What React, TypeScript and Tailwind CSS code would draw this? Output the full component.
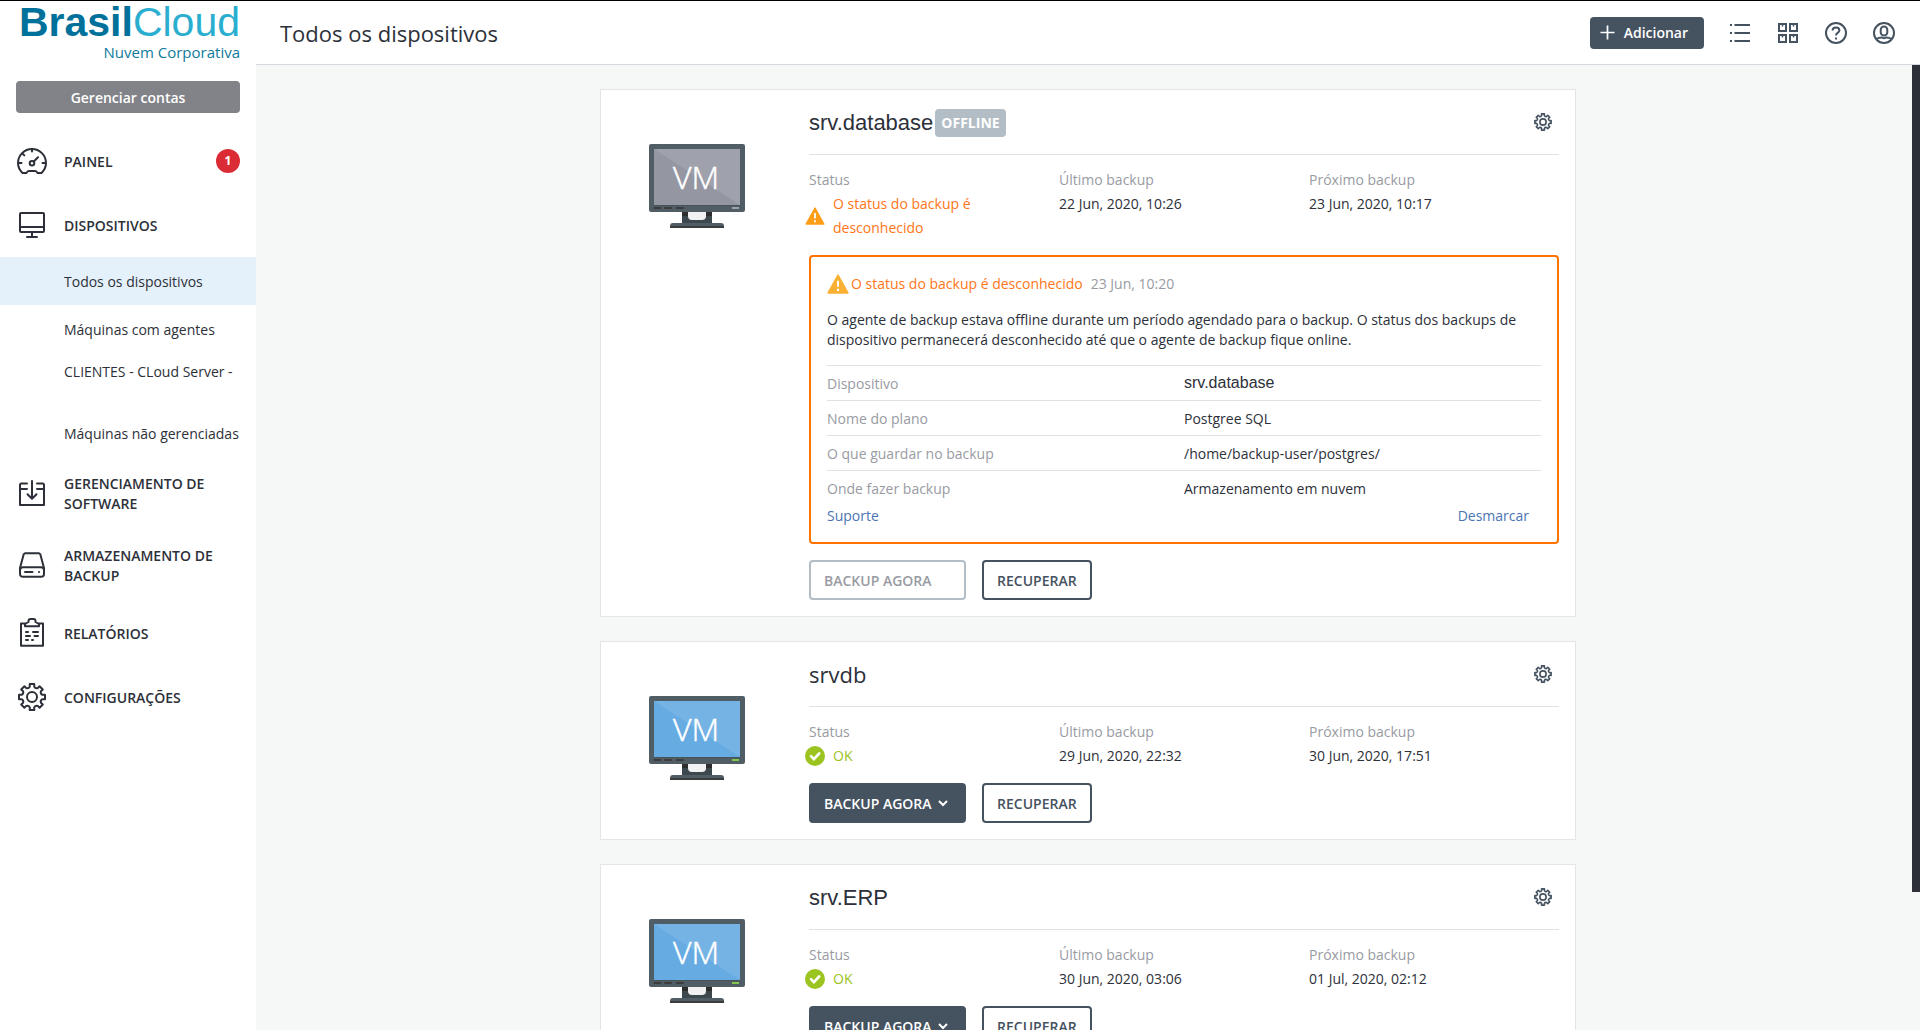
import type { ReactNode } from "react";

type Tone = "online" | "offline";

interface Alert {
    title: string;
    date: string;
    message: string;
    details: { label: string; value: string; plain?: boolean }[];
}

interface Device {
    id: number;
    name: string;
    plainName?: boolean;
    tone: Tone;
    status: string;
    lastBackup: string;
    nextBackup: string;
    alert?: Alert;
}

const DEVICES: Device[] = [
    {
        id: 1,
        name: "srv.database",
        plainName: true,
        tone: "offline",
        status: "O status do backup é desconhecido",
        lastBackup: "22 Jun, 2020, 10:26",
        nextBackup: "23 Jun, 2020, 10:17",
        alert: {
            title: "O status do backup é desconhecido",
            date: "23 Jun, 10:20",
            message:
                "O agente de backup estava offline durante um período agendado para o backup. O status dos backups de dispositivo permanecerá desconhecido até que o agente de backup fique online.",
            details: [
                { label: "Dispositivo", value: "srv.database", plain: true },
                { label: "Nome do plano", value: "Postgree SQL" },
                { label: "O que guardar no backup", value: "/home/backup-user/postgres/" },
                { label: "Onde fazer backup", value: "Armazenamento em nuvem" },
            ],
        },
    },
    {
        id: 2,
        name: "srvdb",
        tone: "online",
        status: "OK",
        lastBackup: "29 Jun, 2020, 22:32",
        nextBackup: "30 Jun, 2020, 17:51",
    },
    {
        id: 3,
        name: "srv.ERP",
        plainName: true,
        tone: "online",
        status: "OK",
        lastBackup: "30 Jun, 2020, 03:06",
        nextBackup: "01 Jul, 2020, 02:12",
    },
];

const PLAIN_FONT = "font-['Liberation_Sans',Arial,sans-serif]";

// Eight-toothed gear centred in a 32x32 box
function gearPath() {
    const at = (r: number, deg: number) => {
        const a = (deg * Math.PI) / 180;
        return `${(16 + r * Math.cos(a)).toFixed(2)} ${(16 + r * Math.sin(a)).toFixed(2)}`;
    };
    let d = "";
    for (let i = 0; i < 8; i++) {
        const a = i * 45;
        d += `${i === 0 ? "M" : "L"}${at(10.6, a - 12)}L${at(13.2, a - 10)}L${at(13.2, a + 10)}L${at(10.6, a + 12)}`;
        d += `Q${at(8.8, a + 22.5)} ${at(10.6, a + 33)}`;
    }
    return d + "Z";
}

const GEAR = gearPath();

function GearIcon({ className, strokeWidth = 2 }: { className?: string; strokeWidth?: number }) {
    return (
        <svg viewBox="0 0 32 32" fill="none" stroke="currentColor" strokeWidth={strokeWidth} strokeLinejoin="round" className={className} aria-hidden="true">
            <path d={GEAR} />
            <circle cx="16" cy="16" r="5" />
        </svg>
    );
}

function NavIcon({ children }: { children: ReactNode }) {
    return (
        <svg viewBox="0 0 32 32" fill="none" stroke="currentColor" strokeWidth="2" strokeLinecap="round" strokeLinejoin="round" className="size-8 shrink-0" aria-hidden="true">
            {children}
        </svg>
    );
}

function NavItem({ icon, label, badge }: { icon: ReactNode; label: string; badge?: number }) {
    return (
        <a href="#" className="flex min-h-16 items-center gap-4 px-4 py-[15px] font-semibold uppercase">
            {icon}
            <span className="flex-1 pt-0.5">{label}</span>
            {badge && (
                <span className="flex size-6 items-center justify-center rounded-full bg-[#db2c36] text-xs font-bold text-white">{badge}</span>
            )}
        </a>
    );
}

function Sidebar() {
    const subItem = "flex h-12 items-center pt-0.5 pl-16";
    return (
        <aside className="w-64 shrink-0 bg-white">
            <a href="#" className="flex h-20 flex-col items-end px-4">
                <span className={`${PLAIN_FONT} text-[41px] leading-[42px] whitespace-nowrap text-[#2aaed0]`}>
                    <strong className="text-[#00719a]">Brasil</strong>Cloud
                </span>
                <span className="text-[15px] leading-[18px] text-[#0f7a9c]">Nuvem Corporativa</span>
            </a>
            <div className="px-4 pb-4">
                <button type="button" className="h-8 w-full rounded bg-[#828388] pt-0.5 font-semibold text-white">
                    Gerenciar contas
                </button>
            </div>
            <nav>
                <NavItem
                    label="Painel"
                    badge={1}
                    icon={
                        <NavIcon>
                            <path d="M6.500 28C3 24.500 2 21 2 18A14 14 0 0 1 30 18C30 21 29 24.500 25.500 28H21.500C21 26.600 20.200 26 19 26H13C11.800 26 11 26.600 10.500 28Z" />
                            <path d="M16 4v2.500M3 18h2.500M26.500 18H29M6.600 8.700l1.700 1.700" />
                            <circle cx="16" cy="18.300" r="2.300" />
                            <path d="M17.800 16.500L22 12.300" />
                        </NavIcon>
                    }
                />
                <NavItem
                    label="Dispositivos"
                    icon={
                        <NavIcon>
                            <rect x="4" y="4" width="24" height="19" rx="1" />
                            <path d="M4 18h24M16 23v5M11 28h10" />
                        </NavIcon>
                    }
                />
                <ul>
                    <li>
                        <a href="#" aria-current="page" className={`${subItem} bg-[#e4f1fa]`}>Todos os dispositivos</a>
                    </li>
                    <li>
                        <a href="#" className={subItem}>Máquinas com agentes</a>
                    </li>
                    <li className="pb-2">
                        <a href="#" className="flex h-12 items-start pt-[9px] pl-16">CLIENTES - CLoud Server -</a>
                    </li>
                    <li>
                        <a href="#" className={subItem}>Máquinas não gerenciadas</a>
                    </li>
                </ul>
                <NavItem
                    label="Gerenciamento de software"
                    icon={
                        <NavIcon>
                            <path d="M11 6.500H5L4 7.500V28H28V7.500L27 6.500H21M4 12h7M21 12h7M16 4v17.500M11.500 17.200l4.500 4.500 4.500-4.500" />
                        </NavIcon>
                    }
                />
                <NavItem
                    label="Armazenamento de backup"
                    icon={
                        <NavIcon>
                            <path d="M9 4.200H23L24.300 5.200L28 19V25A2.800 2.800 0 0 1 25.200 27.800H6.800A2.800 2.800 0 0 1 4 25V19L7.700 5.200Z" />
                            <path d="M4 21A3 3 0 0 1 7 18.200H25A3 3 0 0 1 28 21M9 23h7.500M23 23h.1" />
                        </NavIcon>
                    }
                />
                <NavItem
                    label="Relatórios"
                    icon={
                        <NavIcon>
                            <path d="M9 6.500H5V28.700H27V6.500H23" />
                            <path d="M9 9.200V7L12.500 5V4C12.500 2.600 13 2 14.500 2H17.500C19 2 19.500 2.600 19.500 4V5L23 7V9.200Z" />
                            <path d="M10 15h2M17 15h5M10 19h4M18.500 19h3.500M10 23h2M16 23h1" />
                        </NavIcon>
                    }
                />
                <NavItem label="Configurações" icon={<GearIcon className="size-8 shrink-0" />} />
            </nav>
        </aside>
    );
}

function Header() {
    const iconButton = "flex size-6 items-center justify-center";
    return (
        <header className="flex h-16 shrink-0 items-center justify-between border-b border-[#d6dae0] bg-white px-6">
            <h1 className="text-[22px] leading-8">Todos os dispositivos</h1>
            <div className="flex items-center gap-6 text-[#455260]">
                <button type="button" className="flex h-8 items-center gap-2 rounded bg-[#455260] pr-4 pl-2.5 font-semibold text-white">
                    <svg viewBox="0 0 16 16" stroke="currentColor" strokeWidth="1.700" className="size-4" aria-hidden="true">
                        <path d="M7.500 .5v14M.5 7.500h14" />
                    </svg>
                    Adicionar
                </button>
                <button type="button" aria-label="Lista" className={iconButton}>
                    <svg viewBox="0 0 24 24" stroke="currentColor" strokeWidth="2" className="size-6" aria-hidden="true">
                        <path d="M2 4h2M6.500 4H22M2 12h2M6.500 12H22M2 20h2M6.500 20H22" />
                    </svg>
                </button>
                <button type="button" aria-label="Grade" className={iconButton}>
                    <svg viewBox="0 0 24 24" fill="none" stroke="currentColor" strokeWidth="2" className="size-6" aria-hidden="true">
                        <path d="M3 3h7v7H3ZM14 3h7v7h-7ZM3 14h7v7H3ZM14 14h7v7h-7Z" />
                        <path d="M6.500 3v2.500M17.500 3v2.500M6.500 14v2.500M17.500 14v2.500" strokeWidth="1.500" />
                    </svg>
                </button>
                <button type="button" aria-label="Ajuda" className={iconButton}>
                    <svg viewBox="0 0 24 24" fill="none" stroke="currentColor" strokeWidth="2" className="size-6" aria-hidden="true">
                        <circle cx="12" cy="12" r="10" />
                        <path d="M8.600 9.600C8.600 7.600 10 6.600 12 6.600S15.400 7.700 15.400 9.400C15.400 11.700 12 11.700 12 14.600M12 16.500v2" />
                    </svg>
                </button>
                <button type="button" aria-label="Conta" className={iconButton}>
                    <svg viewBox="0 0 24 24" fill="none" stroke="currentColor" strokeWidth="2" className="size-6" aria-hidden="true">
                        <circle cx="12" cy="12" r="10" />
                        <rect x="8.700" y="5.500" width="6.600" height="9" rx="3.300" />
                        <path d="M4.500 18C6.500 16.600 8.200 16.400 9.500 16.400C10.500 17.400 13.500 17.400 14.500 16.400C15.800 16.400 17.500 16.600 19.500 18" />
                    </svg>
                </button>
            </div>
        </header>
    );
}

function VmMonitor({ tone }: { tone: Tone }) {
    const on = tone === "online";
    return (
        <svg viewBox="0 0 96 84" className="h-[84px] w-24" role="img" aria-label="VM">
            <path d="M33 67h30v14H33Z" fill="#3c474e" />
            <path d="M33 67h30v5H33Z" fill="#2e2e2e" />
            <path d="M39 67h18v5a4 4 0 0 1-4 4H43a4 4 0 0 1-4-4Z" fill="#f1f1f2" />
            <path d="M21 82a3 3 0 0 1 3-3h48a3 3 0 0 1 3 3Z" fill="#515d65" />
            <path d="M21 82h54v2H21Z" fill="#3c3c3c" />
            <rect width="96" height="68" rx="2" fill="#515d65" />
            <path d="M5 5h86v56H5Z" fill={on ? "#66abe2" : "#9497a2"} />
            <path d="M5 5h86v56Z" fill={on ? "#76b3e5" : "#9fa2ac"} />
            <path d="M5 61h86v1H5Z" fill="#46525a" />
            <path d="M5.500 64h6M16 64h6M28 64h6" stroke="#3c3c3c" strokeWidth="2" strokeLinecap="round" />
            <path d="M83 64h7" stroke={on ? "#83c44e" : "#9fa2ac"} strokeWidth="2" />
            <text x="47" y="45" textAnchor="middle" fill="#fff" stroke="#fff" strokeWidth="0.500" className="font-['Open_Sans',sans-serif] text-[32px] font-light">VM</text>
        </svg>
    );
}

function WarningIcon({ className }: { className: string }) {
    return (
        <svg viewBox="0 0 22 20" className={className} aria-hidden="true">
            <path d="M11 1.200L20.800 19H1.200Z" fill="currentColor" stroke="currentColor" strokeWidth="1.600" strokeLinejoin="round" />
            <path d="M11 6.800v6M11 14.800v2.200" stroke="#fff" strokeWidth="2" />
        </svg>
    );
}

function OkIcon() {
    return (
        <svg viewBox="0 0 20 20" className="size-5 shrink-0" aria-hidden="true">
            <circle cx="10" cy="10" r="10" fill="#9bc421" />
            <path d="M6 10.200l2.900 2.900 5.300-5.600" fill="none" stroke="#fff" strokeWidth="2.600" strokeLinecap="round" />
        </svg>
    );
}

function AlertBox({ alert }: { alert: Alert }) {
    return (
        <section className="mt-[15px] rounded border-2 border-[#ff7300] px-4 pt-[15px] pb-4">
            <div className="flex h-6 items-center">
                <WarningIcon className="h-5 w-[22px] text-[#f9b033]" />
                <h3 className="ml-0.5 text-[#ff7519]">{alert.title}</h3>
                <span className="ml-2 text-[#999ba3]">{alert.date}</span>
            </div>
            <p className="mt-3.5 mb-[15px]">{alert.message}</p>
            <table className="w-full table-fixed">
                <tbody>
                    {alert.details.map(row => (
                        <tr key={row.label} className="h-[35px] border-t border-[#dfe1e4]">
                            <th scope="row" className="truncate pt-0.5 text-left leading-4 font-normal text-[#999ba3]">{row.label}</th>
                            <td className={`truncate leading-4 ${row.plain ? `${PLAIN_FONT} text-base` : "pt-0.5"}`}>{row.value}</td>
                        </tr>
                    ))}
                </tbody>
            </table>
            <div className="flex justify-between pr-3 text-[#4a74b4]">
                <a href="#">Suporte</a>
                <a href="#">Desmarcar</a>
            </div>
        </section>
    );
}

function DeviceCard({ device }: { device: Device }) {
    const offline = device.tone === "offline";

    return (
        <article className="flex border border-[#e3e5e7] bg-white pr-4 pb-4">
            <div className="w-52 shrink-0 pt-[54px] pl-12">
                <VmMonitor tone={device.tone} />
            </div>
            <div className="min-w-0 flex-1">
                <div className="flex h-[65px] items-center justify-between border-b border-[#dfe1e4]">
                    <div className={`flex items-center gap-0.5 ${device.plainName ? "pt-0.5" : ""}`}>
                        <h2 className={`text-[22px] leading-8 ${device.plainName ? PLAIN_FONT : ""}`}>{device.name}</h2>
                        {offline && (
                            <span className="rounded bg-[#b2bdc6] px-1.5 py-1 font-bold text-white">OFFLINE</span>
                        )}
                    </div>
                    <button type="button" aria-label="Ajustes" className="p-1.5 text-[#455260]">
                        <GearIcon className="size-5" strokeWidth={2.6} />
                    </button>
                </div>

                <dl className="grid grid-cols-3 pt-[13px] leading-6">
                    <div>
                        <dt className="text-[#999ba3]">Status</dt>
                        <dd className={`-ml-1 flex items-center gap-2 pr-4 ${offline ? "text-[#ff7519]" : "text-[#9bc421]"}`}>
                            {offline ? <WarningIcon className="h-[18px] w-5 shrink-0 text-[#ff9e16]" /> : <OkIcon />}
                            {device.status}
                        </dd>
                    </div>
                    <div>
                        <dt className="text-[#999ba3]">Último backup</dt>
                        <dd>{device.lastBackup}</dd>
                    </div>
                    <div>
                        <dt className="text-[#999ba3]">Próximo backup</dt>
                        <dd>{device.nextBackup}</dd>
                    </div>
                </dl>

                {device.alert && <AlertBox alert={device.alert} />}

                <div className={`flex gap-4 font-semibold ${device.alert ? "mt-4" : "mt-[15px]"}`}>
                    <button
                        type="button"
                        disabled={offline}
                        className={`flex h-10 w-[157px] items-center gap-1.5 rounded border-2 px-[13px] pt-0.5 whitespace-nowrap ${
                            offline ? "border-[#b2bdc6] text-[#999ba3]" : "border-[#455260] bg-[#455260] text-white"
                        }`}
                    >
                        BACKUP AGORA
                        {!offline && (
                            <svg viewBox="0 0 10 8" fill="none" stroke="currentColor" strokeWidth="2" className="h-2 w-2.5 shrink-0" aria-hidden="true">
                                <path d="M1 1l4 4 4-4" />
                            </svg>
                        )}
                    </button>
                    <button type="button" className="h-10 rounded border-2 border-[#455260] px-[13px] pt-0.5 text-[#455260]">
                        RECUPERAR
                    </button>
                </div>
            </div>
        </article>
    );
}

export default function App() {
    return (
        <div className="flex h-screen overflow-hidden border-t border-black bg-[#f6f8f8] font-['Open_Sans',sans-serif] text-sm text-[#2d3039]">
            <Sidebar />
            <div className="flex min-w-0 flex-1 flex-col">
                <Header />
                <main className="relative min-h-0 flex-1 overflow-hidden">
                    <div className="mx-auto flex max-w-[976px] flex-col gap-6 py-6">
                        {DEVICES.map(device => (
                            <DeviceCard key={device.id} device={device} />
                        ))}
                    </div>
                    {/* Scroll thumb */}
                    <div className="absolute top-0 right-0 h-6/7 w-2 bg-[#2d3039]" />
                </main>
            </div>
        </div>
    );
}
